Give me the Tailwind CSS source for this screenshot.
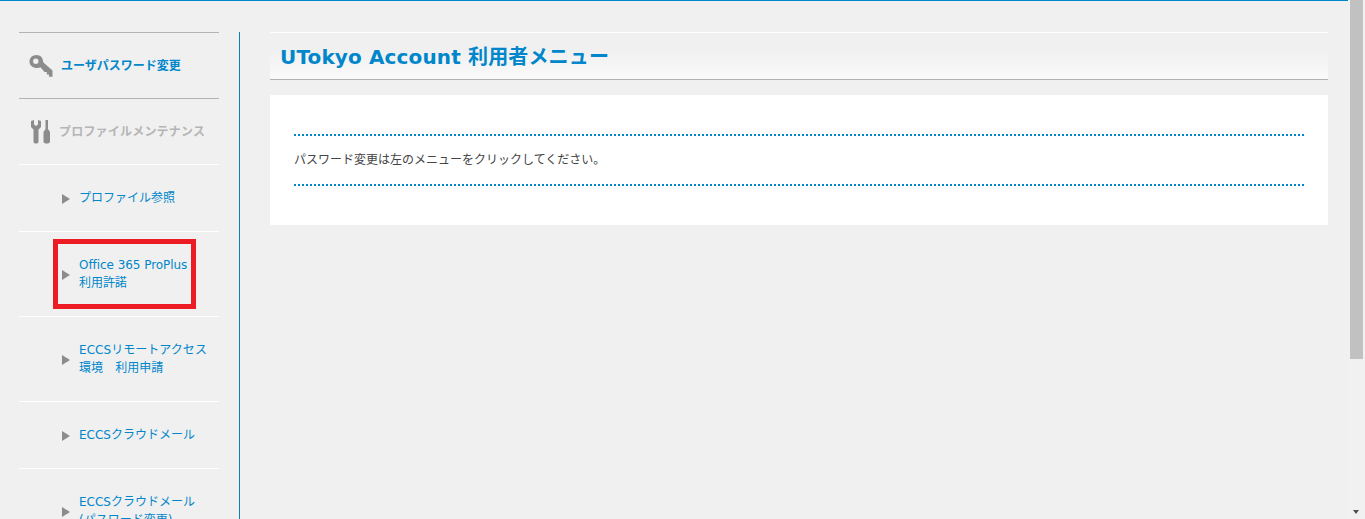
<!DOCTYPE html>
<html lang="ja">
<head>
<meta charset="UTF-8">
<title>UTokyo Account</title>
<script src="https://cdn.jsdelivr.net/npm/@tailwindcss/browser@4"></script>
</head>
<body class="h-[519px] overflow-hidden bg-[#f0f0f0] font-['DejaVu_Sans','Noto_Sans_CJK_JP',sans-serif]">
<div class="flex h-[519px]">
  <div class="w-[1348px] h-[519px] border-t border-[#0086cb] overflow-hidden">
    <div class="flex pl-[19px] pt-[31px]">

      <!-- side menu -->
      <div class="w-[200px] shrink-0">
        <a class="flex items-center h-[66px] pl-[10px] border-t border-[#b3b3b3] text-[12px] font-bold text-[#0086cb]">
          <svg class="w-[24px] h-[24px] mr-[8px] shrink-0" viewBox="0 0 24 24" fill="#8c8c8c"><path fill-rule="evenodd" d="M7.500 1C11.200 1 14 3.800 14 7.300L14.700 8.700L23.500 16.500V22.700H20V20.500H17.800V18H15.500L11.500 13.300C10.600 13.700 9.500 14 8 14C3.800 14 0.500 11.500 0.500 7.500C0.500 3.800 3.500 1 7.500 1ZM6.800 4.500A2.700 2.700 0 1 0 6.800 9.900A2.700 2.700 0 1 0 6.800 4.500Z"/></svg>
          ユーザパスワード変更
        </a>
        <div class="flex items-center h-[66px] pl-[12px] border-t border-[#b3b3b3] text-[12px] font-bold text-[#b5b5b5] tracking-[0.2px]">
          <svg class="w-[20px] h-[24px] mr-[8px] shrink-0" viewBox="0 0 20 24" fill="#8c8c8c"><path d="M0 1L3 0V4.500L5 6L7 4.500V0L10 1V7L7.500 9.500V21.500C7.500 23 6.500 23.500 5 23.500C3.500 23.500 2.500 23 2.500 21.500V9.500L0 7Z"/><path d="M14.500 0H17V9L19 12V21.500C19 23 17.500 23.500 15.700 23.500C14 23.500 12.500 23 12.500 21.500V12L14.500 9Z"/></svg>
          プロファイルメンテナンス
        </div>
        <a class="flex items-center h-[67px] pl-[43px] border-t border-white text-[12px] leading-[18px] text-[#0086cb]">
          <span class="w-[17px] shrink-0"><span class="block mt-[2px] w-0 h-0 border-y-[5px] border-y-transparent border-l-[8px] border-l-[#8c8c8c]"></span></span>
          <span>プロファイル参照</span>
        </a>
        <div class="h-[85px] border-t border-white pl-[34px] pt-[7px]">
          <a class="flex items-center w-[143px] h-[70px] pl-[4px] border-[5px] border-[#ed1c24] text-[12px] leading-[18px] text-[#0086cb] tracking-[-0.05px]">
            <span class="w-[17px] shrink-0"><span class="block mt-[2px] w-0 h-0 border-y-[5px] border-y-transparent border-l-[8px] border-l-[#8c8c8c]"></span></span>
            <span class="whitespace-nowrap">Office 365 ProPlus<br>利用許諾</span>
          </a>
        </div>
        <a class="flex items-center h-[85px] pl-[43px] border-t border-white text-[12px] leading-[18px] text-[#0086cb] tracking-[0.05px]">
          <span class="w-[17px] shrink-0"><span class="block mt-[2px] w-0 h-0 border-y-[5px] border-y-transparent border-l-[8px] border-l-[#8c8c8c]"></span></span>
          <span class="whitespace-nowrap">ECCSリモートアクセス<br>環境　利用申請</span>
        </a>
        <a class="flex items-center h-[67px] pl-[43px] border-t border-white text-[12px] leading-[18px] text-[#0086cb]">
          <span class="w-[17px] shrink-0"><span class="block mt-[2px] w-0 h-0 border-y-[5px] border-y-transparent border-l-[8px] border-l-[#8c8c8c]"></span></span>
          <span>ECCSクラウドメール</span>
        </a>
        <a class="flex items-center h-[85px] pl-[43px] border-t border-white text-[12px] leading-[18px] text-[#0086cb]">
          <span class="w-[17px] shrink-0"><span class="block mt-[2px] w-0 h-0 border-y-[5px] border-y-transparent border-l-[8px] border-l-[#8c8c8c]"></span></span>
          <span class="whitespace-nowrap">ECCSクラウドメール<br>(パスワード変更)</span>
        </a>
      </div>

      <!-- divider + main -->
      <div class="ml-[20px] w-[1089px] h-[600px] border-l border-[#0f7fb8] pl-[30px]">
        <div class="w-[1058px] h-[48px] border-t border-white border-b border-b-[#b3b3b3] bg-gradient-to-b from-[#f0f0f0] from-40% to-[#fafafa] pl-[10px] pt-[2px] flex items-center">
          <h1 class="text-[20px] font-bold text-[#0086cb] tracking-[0.14px]">UTokyo Account 利用者メニュー</h1>
        </div>
        <div class="mt-[15px] w-[1058px] h-[130px] bg-white px-[24px] pt-[39px]">
          <div class="h-[52px] border-y-2 border-dotted border-[#0086cb] flex items-center text-[12px] text-[#444]">
            パスワード変更は左のメニューをクリックしてください。
          </div>
        </div>
      </div>
    </div>
  </div>

  <!-- scrollbar -->
  <div class="w-[17px] h-[519px] bg-[#f1f1f1] pl-[2px] flex flex-col justify-between">
    <div class="w-[13px] h-[359px] bg-[#c1c1c1]"></div>
    <div class="w-0 h-0 ml-[3px] mb-[5px] border-x-[3.500px] border-x-transparent border-t-[4px] border-t-[#505050]"></div>
  </div>
</div>
</body>
</html>
